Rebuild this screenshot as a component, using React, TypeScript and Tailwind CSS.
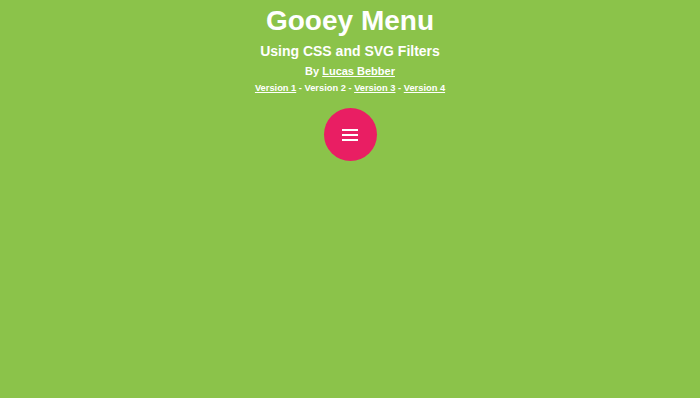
import React from 'react';

const App: React.FC = () => {
  const font = { fontFamily: '"Liberation Sans", Arial, sans-serif' };

  return (
    <div className="w-[700px] h-[398px] bg-[#8bc34a] text-white flex flex-col items-center pt-[7px]" style={font}>
      {/* Heading */}
      <h1 className="text-[28px] leading-[28px] font-bold">Gooey Menu</h1>
      <h2 className="mt-[9px] text-[14px] leading-[14px] font-bold">Using CSS and SVG Filters</h2>
      <p className="mt-[7px] text-[11px] leading-[12px] font-bold">
        By <a className="underline">Lucas Bebber</a>
      </p>
      <p className="mt-[6px] text-[9.3px] leading-[10px] font-bold">
        <a className="underline">Version 1</a> - Version 2 - <a className="underline">Version 3</a> -{' '}
        <a className="underline">Version 4</a>
      </p>

      {/* Menu button */}
      <button className="mt-[15px] w-[53px] h-[53px] rounded-full bg-[#e91e63] flex flex-col items-center justify-center gap-[3px]">
        <span className="block w-[16px] h-[2px] bg-white" />
        <span className="block w-[16px] h-[2px] bg-white" />
        <span className="block w-[16px] h-[2px] bg-white" />
      </button>
    </div>
  );
};

export default App;
